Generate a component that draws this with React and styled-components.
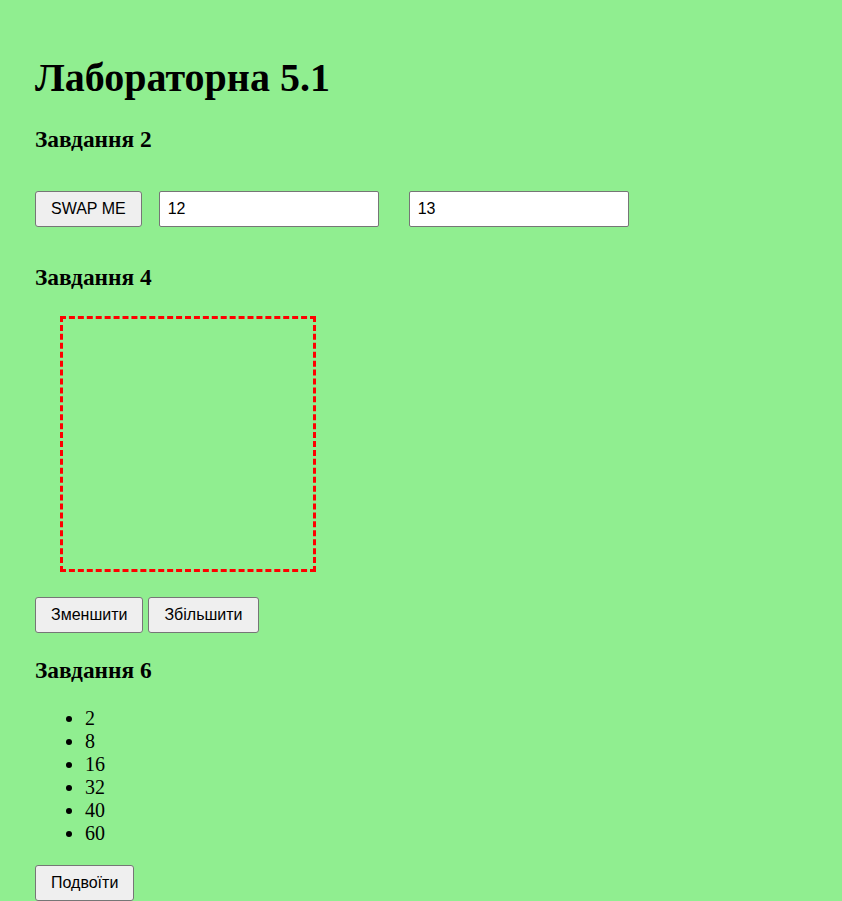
import React, { useState } from "react";
import styled, { createGlobalStyle } from "styled-components";

const Global = createGlobalStyle`
  html, body {
    margin: 0;
    padding: 0;
    background: #90ee90;
  }
  body {
    font-family: "Liberation Serif", "Times New Roman", serif;
    font-size: 20px;
    color: #000;
  }
`;

const Page = styled.main`
  padding: 55px 35px 40px;
  display: flow-root;
`;

const Title = styled.h1`
  margin: 0;
  font-size: 40px;
  line-height: 46px;
  font-weight: bold;
`;

const Section = styled.h3`
  margin: ${(p) => p.$top}px 0 0;
  font-size: 23.4px;
  line-height: 27px;
  font-weight: bold;
`;

const Row = styled.div`
  display: flex;
  align-items: center;
  gap: ${(p) => p.$gap}px;
  margin-top: ${(p) => p.$top}px;
`;

const Button = styled.button`
  box-sizing: border-box;
  height: 36px;
  padding: 0 15px;
  font-family: "Liberation Sans", Arial, sans-serif;
  font-size: 16px;
  line-height: 18px;
  color: #000;
  background: #efefef;
  border: 1px solid #767676;
  border-radius: 3px;
  cursor: pointer;
  margin-top: ${(p) => p.$top || 0}px;
  &:hover {
    background: #e5e5e5;
  }
`;

const Field = styled.input`
  box-sizing: border-box;
  width: 220px;
  height: 36px;
  padding: 0 8px;
  font-family: "Liberation Sans", Arial, sans-serif;
  font-size: 16px;
  color: #000;
  background: #fff;
  border: 1px solid #767676;
  border-radius: 2px;
  margin-left: ${(p) => p.$left}px;
  outline: none;
`;

const Square = styled.div`
  box-sizing: border-box;
  margin: 25px 0 0 25px;
  border: 3px dashed #ff0000;
`;

const List = styled.ul`
  margin: 23px 0 0;
  padding-left: 50px;
  list-style: disc;
  li {
    line-height: 23px;
  }
`;

export default function App() {
  const [a, setA] = useState("12");
  const [b, setB] = useState("13");
  const [size, setSize] = useState(256);
  const [nums, setNums] = useState([2, 8, 16, 32, 40, 60]);

  return (
    <>
      <Global />
      <Page>
        <Title>Лабораторна 5.1</Title>

        <Section $top={25}>Завдання 2</Section>
        <Row $top={38} $gap={0}>
          <Button
            onClick={() => {
              setA(b);
              setB(a);
            }}
          >
            SWAP ME
          </Button>
          <Field $left={17} value={a} onChange={(e) => setA(e.target.value)} />
          <Field $left={30} value={b} onChange={(e) => setB(e.target.value)} />
        </Row>

        <Section $top={37}>Завдання 4</Section>
        <Square style={{ width: size, height: size }} />
        <Row $top={25} $gap={5}>
          <Button onClick={() => setSize((s) => Math.max(20, s - 20))}>Зменшити</Button>
          <Button onClick={() => setSize((s) => s + 20)}>Збільшити</Button>
        </Row>

        <Section $top={24}>Завдання 6</Section>
        <List>
          {nums.map((n, i) => (
            <li key={i}>{n}</li>
          ))}
        </List>
        <Button $top={20} onClick={() => setNums((l) => l.map((n) => n * 2))}>
          Подвоїти
        </Button>
      </Page>
    </>
  );
}
